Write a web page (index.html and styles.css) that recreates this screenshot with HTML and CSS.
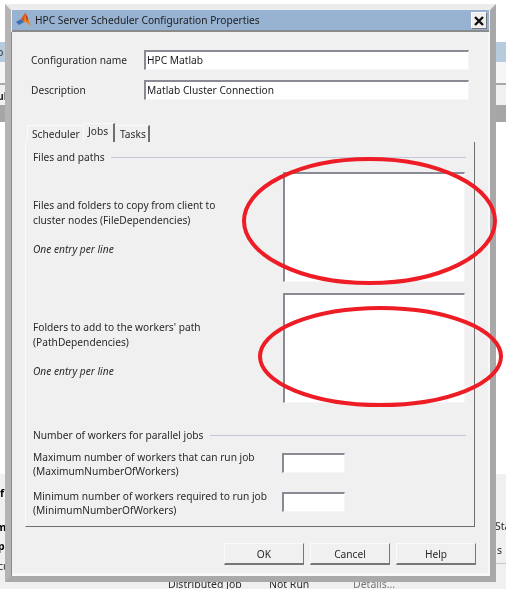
FILE: index.html
```html
<!DOCTYPE html>
<html lang="en">
<head>
    <meta charset="UTF-8">
    <title>HPC Server Scheduler Configuration Properties</title>
    <link rel="stylesheet" href="styles.css">
</head>
<body>
<div class="desktop">
    <!-- window behind the dialog, only its edges show -->
    <div class="backWindow">
        <div class="bandTop"></div>
        <div class="bandBlue"><span class="frag fragO">o</span></div>
        <div class="bandLight"></div>
        <div class="bandTool"><span class="frag fragUl">ul</span></div>
        <div class="bandGrey"></div>
        <div class="bandWhite"></div>
        <div class="bandBottom">
            <span class="frag fragB fragF">f</span>
            <span class="frag fragB fragM">m</span>
            <span class="frag fragB fragP">p</span>
            <span class="frag fragCu">cu</span>
            <span class="frag fragSta">Sta</span>
            <span class="frag fragS">s</span>
            <div class="bottomLine"></div>
            <span class="frag jobCell jobName">Distributed Job</span>
            <span class="frag jobCell jobState">Not Run</span>
            <span class="frag jobCell jobLink">Details...</span>
        </div>
    </div>

    <div class="dialog">
        <div class="titleBar">
            <svg class="appIcon" width="16" height="14" viewBox="0 0 16 14">
                <polygon points="0,9 5,6 8,9 3,12" fill="#3f6fb0"/>
                <polygon points="5,6 9,0 11,3 8,9" fill="#d9541e"/>
                <polygon points="9,0 12,5 15,13 11,10 8,9" fill="#e8862a"/>
                <polygon points="9,0 12,5 11,9 10,4" fill="#b8321a"/>
            </svg>
            <span class="titleText">HPC Server Scheduler Configuration Properties</span>
            <div class="closeBtn">
                <svg width="12" height="12" viewBox="0 0 12 12">
                    <path d="M2 2 L10 10 M10 2 L2 10" stroke="#111" stroke-width="2.4" fill="none"/>
                </svg>
            </div>
        </div>

        <div class="dialogBody">
            <div class="fieldRow">
                <label>Configuration name</label>
                <div class="sunken textField">HPC Matlab</div>
            </div>
            <div class="fieldRow">
                <label>Description</label>
                <div class="sunken textField">Matlab Cluster Connection</div>
            </div>

            <div class="tabs">
                <div class="tab">Scheduler</div>
                <div class="tab tabActive">Jobs</div>
                <div class="tab tabLast">Tasks</div>
            </div>

            <div class="tabPanel">
                <div class="legend"><span>Files and paths</span><i></i></div>
                <div class="pathRow">
                    <div>
                        <p>Files and folders to copy from client to<br>cluster nodes (FileDependencies)</p>
                        <p class="hint">One entry per line</p>
                    </div>
                    <div class="sunken listBox"></div>
                </div>
                <div class="pathRow">
                    <div class="pathText">
                        <p>Folders to add to the workers' path<br>(PathDependencies)</p>
                        <p class="hint">One entry per line</p>
                    </div>
                    <div class="sunken listBox"></div>
                </div>

                <div class="legend legendWorkers"><span>Number of workers for parallel jobs</span><i></i></div>
                <div class="workerRow">
                    <p>Maximum number of workers that can run job<br>(MaximumNumberOfWorkers)</p>
                    <div class="sunken numField"></div>
                </div>
                <div class="workerRow">
                    <p>Minimum number of workers required to run job<br>(MinimumNumberOfWorkers)</p>
                    <div class="sunken numField"></div>
                </div>
            </div>

            <div class="buttons">
                <div class="btn">OK</div>
                <div class="btn">Cancel</div>
                <div class="btn">Help</div>
            </div>
        </div>
    </div>

    <!-- red marks drawn over the screenshot -->
    <svg class="marks" width="506" height="589" viewBox="0 0 506 589">
        <ellipse cx="369.5" cy="221" rx="125.5" ry="62" fill="none" stroke="#ee1c25" stroke-width="4"/>
        <ellipse cx="380.5" cy="356.5" rx="120.5" ry="48.5" fill="none" stroke="#ee1c25" stroke-width="4"/>
    </svg>
</div>
</body>
</html>
```

FILE: styles.css
```css
html, body {
    margin: 0;
    padding: 0;
    background: #fff;
}

.desktop {
    position: relative;
    width: 506px;
    height: 589px;
    overflow: hidden;
    font-family: "Noto Sans", sans-serif;
    font-size: 10.2px;
    color: #2a2a2a;
    filter: blur(0.4px);
}

p {
    margin: 0;
}

/* back window */
.backWindow {
    display: flex;
    flex-direction: column;
    height: 589px;
}
.bandTop { height: 36px; background: #fff; }
.bandBlue { height: 26px; background: #b8cbdc; border-top: 6px solid #fff; box-sizing: border-box; }
.bandLight { height: 21px; background: #f6f6f6; border-bottom: 2px solid #a8a8a8; }
.bandTool { height: 20px; background: #f0f0f0; }
.bandGrey { height: 17px; background: #a6a6a6; }
.bandWhite { height: 352px; background: #fff; }
.bandBottom { flex: 1; background: #f0f0f0; }

.frag {
    position: absolute;
    line-height: 14px;
    font-size: 10.5px;
    color: #2a2a2a;
}
.fragB { font-weight: bold; color: #000; }
.fragO { left: -3px; top: 45px; }
.fragUl { left: -3px; top: 89px; font-weight: bold; }
.fragF { left: 0; top: 486px; }
.fragM { left: -4px; top: 520px; }
.fragP { left: -2px; top: 539px; }
.fragCu { left: -2px; top: 559px; }
.fragSta { left: 495px; top: 519px; }
.fragS { left: 497px; top: 543px; }
.bottomLine {
    position: absolute;
    left: 496px;
    right: 0;
    top: 563px;
    height: 1px;
    background: #c8c8c8;
}
.jobCell { top: 577px; }
.jobName { left: 168px; }
.jobState { left: 269px; }
.jobLink { left: 353px; color: #777; }

/* dialog */
.dialog {
    position: absolute;
    left: 5px;
    top: 4px;
    width: 491px;
    height: 578px;
    box-sizing: border-box;
    border-top: 6px solid #ececec;
    border-left: 6px solid #b4b4b4;
    border-right: 6px solid #a8a8a8;
    border-bottom: 6px solid #a9a9a9;
    background: #f0f0f0;
    display: flex;
    flex-direction: column;
}

.titleBar {
    display: flex;
    align-items: center;
    height: 22px;
    flex-shrink: 0;
    box-sizing: border-box;
    margin-left: 1px;
    margin-right: 1px;
    padding-left: 4px;
    padding-right: 2px;
    background: #97b3d1;
    border-bottom: 2px solid #8b8b8b;
}
.appIcon { margin-right: 3px; }
.titleText {
    flex: 1;
    color: #1c1c1c;
}
.closeBtn {
    width: 16px;
    height: 17px;
    margin-top: 1px;
    display: flex;
    align-items: center;
    justify-content: center;
    background: #f0f0f0;
    border: 1px solid #fafafa;
    border-right-color: #777;
    border-bottom-color: #777;
    box-sizing: border-box;
}

.dialogBody {
    flex: 1;
    padding: 18px 14px 0 13px;
    border-left: 1px solid #8a8a8a;
    box-shadow: inset -2px -3px 0 #f8f8f8;
}

.fieldRow {
    display: flex;
    align-items: center;
    margin-bottom: 10px;
    padding-left: 6px;
}
.fieldRow label {
    width: 113px;
}

.sunken {
    box-sizing: border-box;
    background: #fff;
    border: 1px solid #f6f6fa;
    border-top: 2px solid #8a8a94;
    border-left: 2px solid #8a8a94;
}
.textField {
    width: 325px;
    height: 20px;
    line-height: 17px;
    padding-left: 1px;
    color: #1c1c1c;
}

.tabs {
    display: flex;
    align-items: flex-end;
    height: 19px;
    margin-top: 23px;
    padding-left: 2px;
}
.tab {
    height: 17px;
    line-height: 16px;
    padding: 0 4px;
    box-sizing: border-box;
    background: #f0f0f0;
    border-top: 1px solid #fafafa;
    border-left: 1px solid #fafafa;
}
.tab:first-child { width: 55px; }
.tabActive {
    height: 19px;
    width: 32px;
    margin-left: 1px;
    line-height: 15px;
    border-right: 2px solid #6f6f6f;
}
.tabLast {
    width: 35px;
    padding-left: 5px;
    border-right: 2px solid #6f6f6f;
    border-left: none;
}

.tabPanel {
    box-sizing: border-box;
    height: 385px;
    padding: 7px 8px 0 7px;
    width: 450px;
    border: 1px solid #fafafa;
    border-right: 1px solid #6f6f6f;
    border-bottom: 1px solid #6f6f6f;
    border-top: none;
}

.legend {
    display: flex;
    align-items: center;
    height: 16px;
    margin-bottom: 7px;
}
.legend i {
    flex: 1;
    height: 1px;
    margin-left: 6px;
    background: #c3c8d8;
}
.legendWorkers {
    margin-top: 24px;
    margin-bottom: 7px;
}

.pathRow {
    display: grid;
    grid-template-columns: 250px 182px;
    align-items: center;
    line-height: 15px;
    margin-bottom: 11px;
}
.pathText {
    padding-top: 2px;
}
.hint {
    margin-top: 14px;
    font-style: italic;
}
.listBox {
    height: 110px;
}

.workerRow {
    display: grid;
    grid-template-columns: 249px 63px;
    line-height: 14px;
    margin-bottom: 11px;
}
.numField {
    height: 20px;
    margin-top: 3px;
}

.buttons {
    display: flex;
    gap: 6px;
    justify-content: flex-end;
    margin-top: 16px;
}
.btn {
    width: 80px;
    height: 22px;
    line-height: 20px;
    text-align: center;
    box-sizing: border-box;
    background: #f0f0f0;
    border: 1px solid #fafafa;
    border-right: 1px solid #777;
    border-bottom: 2px solid #777;
}

.marks {
    position: absolute;
    left: 0;
    top: 0;
}
```
